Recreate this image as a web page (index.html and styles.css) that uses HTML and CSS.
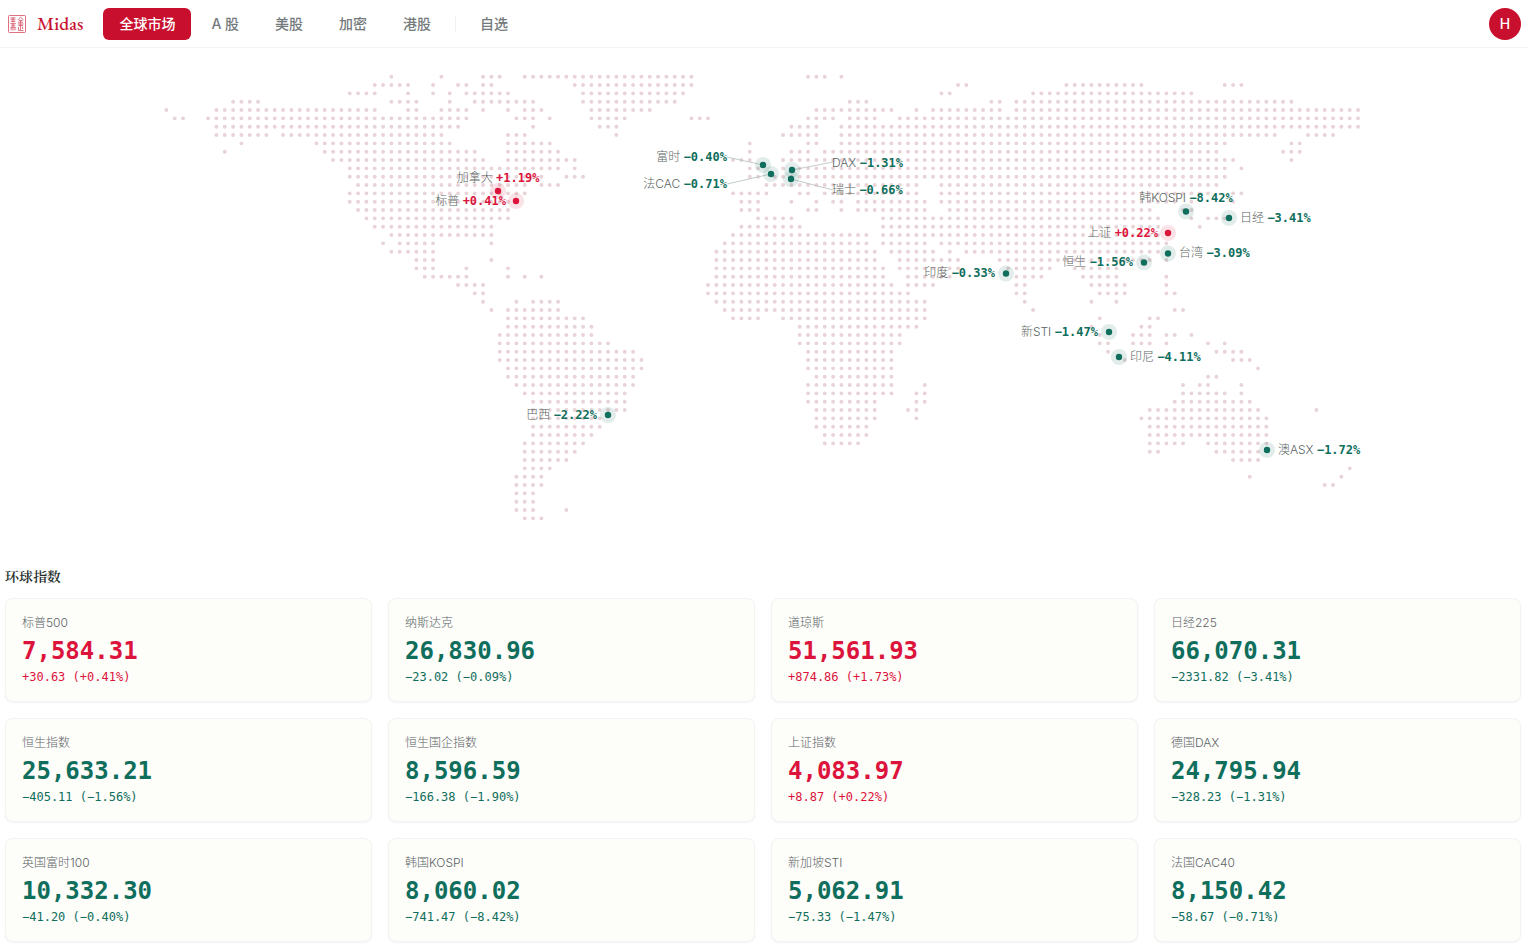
FILE: index.html
```html
<!DOCTYPE html>
<html lang="zh-CN">
<head>
    <meta charset="UTF-8">
    <meta name="viewport" content="width=device-width, initial-scale=1.0">
    <title>Midas</title>
    <link rel="stylesheet" href="styles.css">
</head>
<body>
    <header class="topbar">
        <a class="brand" href="#">
            <svg class="seal" viewBox="0 0 18 18" aria-hidden="true">
                <rect x=".5" y=".5" width="17" height="17" rx="1"/>
                <path d="M12.5 2.2 9.8 5M12.5 2.2 15.6 5M10.8 5.4h3.6M10 7.2h5M12.6 5.4v3.4M9.8 9h5.8M10.4 10.6h4.6M12.6 9v6.4M10.6 12v3.6M10.6 15.6h5M14.6 11.8v2.4M2.4 3h5.2M2.6 4.8h4.8M5 2.2v5M3 6.6h4.4M2.4 8.6h5.4M3.2 10.2h4M5 8.6v7M2.6 12.2h5M3.2 12.2v3.2M7 12.2v3.2"/>
            </svg>
            <span>Midas</span>
        </a>
        <nav class="tabs">
            <a class="tab active" href="#">全球市场</a>
            <a class="tab" href="#">A 股</a>
            <a class="tab" href="#">美股</a>
            <a class="tab" href="#">加密</a>
            <a class="tab" href="#">港股</a>
            <span class="divider"></span>
            <a class="tab" href="#">自选</a>
        </nav>
        <button class="avatar" type="button">H</button>
    </header>

    <main>
        <svg class="map" viewBox="0 0 1528 504">
            <!-- one unit per dot, one line per row -->
            <g transform="translate(166.4 28.7) scale(8.3333)">
                <path class="land" d="
                    M27 0h.1M33 0h.1M38 0h2.1M43 0h20.1M77 0h2.1M81 0h.1
                    M25 1h4.1M32 1h.1M35 1h1.1M38 1h1.1M49 1h14.1M95 1h1.1M108 1h9.1M127 1h2.1
                    M22 2h3.1M29 2h.1M32 2h.1M34 2h.1M36 2h5.1M50 2h12.1M93 2h1.1M104 2h19.1
                    M8 3h3.1M27 3h3.1M34 3h.1M37 3h7.1M50 3h11.1M82 3h2.1M99 3h1.1M102 3h33.1
                    M0 4h.1M6 4h19.1M29 4h1.1M33 4h3.1M38 4h.1M41 4h.1M43 4h2.1M51 4h7.1M78 4h9.1M90 4h.1M92 4h8.1M102 4h41.1
                    M1 5h1.1M5 5h31.1M42 5h2.1M46 5h.1M51 5h4.1M63 5h2.1M77 5h3.1M82 5h3.1M88 5h55.1
                    M6 6h29.1M44 6h.1M52 6h2.1M75 6h3.1M81 6h62.1
                    M6 7h6.1M14 7h19.1M41 7h2.1M54 7h.1M74 7h4.1M81 7h52.1M137 7h3.1
                    M9 8h.1M18 8h16.1M41 8h5.1M70 8h.1M77 8h1.1M81 8h46.1M135 8h1.1
                    M7 9h.1M19 9h18.1M41 9h6.1M70 9h.1M75 9h2.1M79 9h47.1M134 9h2.1
                    M20 10h18.1M41 10h8.1M68 10h2.1M74 10h54.1M135 10h.1
                    M22 11h25.1M49 11h.1M70 11h1.1M74 11h53.1M129 11h.1
                    M22 12h23.1M48 12h2.1M70 12h1.1M73 12h54.1
                    M23 13h20.1M45 13h2.1M72 13h18.1M93 13h33.1
                    M22 14h21.1M68 14h4.1M76 14h1.1M79 14h11.1M93 14h32.1M128 14h1.1
                    M22 15h19.1M69 15h2.1M75 15h.1M78 15h.1M80 15h1.1M83 15h8.1M93 15h28.1M123 15h.1M128 15h.1
                    M23 16h18.1M69 16h2.1M77 16h1.1M81 16h.1M83 16h8.1M94 16h24.1M122 16h1.1
                    M24 17h17.1M71 17h4.1M86 17h33.1M123 17h.1M125 17h2.1
                    M25 18h14.1M69 18h7.1M86 18h33.1M124 18h.1
                    M27 19h12.1M68 19h16.1M86 19h33.1
                    M26 20h.1M28 20h4.1M39 20h.1M67 20h17.1M86 20h5.1M93 20h27.1
                    M27 21h5.1M66 21h19.1M87 21h5.1M94 21h.1M96 21h23.1
                    M30 22h2.1M39 22h.1M66 22h19.1M88 22h7.1M100 22h18.1M120 22h.1
                    M30 23h2.1M36 23h.1M41 23h.1M66 23h20.1M88 23h7.1M101 23h5.1M109 23h5.1
                    M31 24h5.1M41 24h.1M43 24h.1M45 24h.1M66 24h20.1M89 24h5.1M102 24h3.1M110 24h4.1M120 24h.1
                    M35 25h3.1M65 25h22.1M89 25h3.1M102 25h1.1M111 25h4.1M120 25h.1
                    M37 26h1.1M65 26h24.1M102 26h1.1M112 26h3.1M120 26h1.1
                    M38 27h.1M42 27h.1M44 27h3.1M66 27h25.1M103 27h.1M111 27h.1M114 27h.1
                    M39 28h.1M41 28h6.1M67 28h24.1M104 28h.1M121 28h1.1
                    M41 29h9.1M68 29h3.1M74 29h17.1M112 29h.1M118 29h1.1
                    M41 30h10.1M76 30h14.1M111 30h.1M117 30h1.1
                    M40 31h11.1M76 31h12.1M112 31h.1M116 31h2.1M120 31h1.1M123 31h.1
                    M40 32h13.1M76 32h12.1M112 32h1.1M116 32h2.1M120 32h.1M125 32h.1M127 32h.1
                    M40 33h16.1M77 33h10.1M113 33h.1M126 33h3.1
                    M40 34h17.1M77 34h10.1M115 34h.1M128 34h2.1
                    M41 35h16.1M77 35h10.1M131 35h.1
                    M41 36h15.1M78 36h9.1M125 36h1.1
                    M42 37h14.1M77 37h10.1M91 37h.1M122 37h.1M124 37h1.1M129 37h.1
                    M43 38h12.1M77 38h10.1M90 38h1.1M122 38h5.1M129 38h.1
                    M44 39h11.1M77 39h8.1M90 39h1.1M121 39h9.1
                    M44 40h11.1M78 40h7.1M89 40h1.1M118 40h13.1M138 40h.1
                    M44 41h8.1M78 41h7.1M90 41h.1M117 41h15.1
                    M44 42h8.1M78 42h6.1M118 42h14.1
                    M44 43h7.1M79 43h5.1M118 43h14.1
                    M43 44h7.1M79 44h4.1M118 44h4.1M125 44h7.1
                    M43 45h6.1M118 45h1.1M126 45h5.1
                    M43 46h5.1M128 46h3.1
                    M43 47h3.1M142 47h.1
                    M42 48h3.1M130 48h.1M141 48h.1
                    M42 49h3.1M139 49h1.1
                    M42 50h2.1
                    M42 51h2.1
                    M42 52h2.1M48 52h.1
                    M43 53h2.1"/>
            </g>

            <g class="leaders">
                <path d="M727 109 763 117M727 136 771 126M833 114 792 122M833 142 791 131"/>
            </g>

            <g class="up">
                <circle class="halo" cx="498" cy="143" r="8"/><circle cx="498" cy="143" r="3.200"/>
                <circle class="halo" cx="516" cy="153" r="8"/><circle cx="516" cy="153" r="3.200"/>
                <circle class="halo" cx="1168" cy="185" r="8"/><circle cx="1168" cy="185" r="3.200"/>
            </g>
            <g class="down">
                <circle class="halo" cx="763" cy="117" r="8"/><circle cx="763" cy="117" r="3.200"/>
                <circle class="halo" cx="771" cy="126" r="8"/><circle cx="771" cy="126" r="3.200"/>
                <circle class="halo" cx="792" cy="122" r="8"/><circle cx="792" cy="122" r="3.200"/>
                <circle class="halo" cx="791" cy="131" r="8"/><circle cx="791" cy="131" r="3.200"/>
                <circle class="halo" cx="1186" cy="163.500" r="8"/><circle cx="1186" cy="163.500" r="3.200"/>
                <circle class="halo" cx="1229" cy="170" r="8"/><circle cx="1229" cy="170" r="3.200"/>
                <circle class="halo" cx="1168" cy="205.500" r="8"/><circle cx="1168" cy="205.500" r="3.200"/>
                <circle class="halo" cx="1144" cy="214.500" r="8"/><circle cx="1144" cy="214.500" r="3.200"/>
                <circle class="halo" cx="1006" cy="225.500" r="8"/><circle cx="1006" cy="225.500" r="3.200"/>
                <circle class="halo" cx="1109" cy="284" r="8"/><circle cx="1109" cy="284" r="3.200"/>
                <circle class="halo" cx="1119" cy="309" r="8"/><circle cx="1119" cy="309" r="3.200"/>
                <circle class="halo" cx="608" cy="367" r="8"/><circle cx="608" cy="367" r="3.200"/>
                <circle class="halo" cx="1267" cy="402" r="8"/><circle cx="1267" cy="402" r="3.200"/>
            </g>

            <g class="labels">
                <text class="mid" x="498" y="134">加拿大 <tspan class="pct up">+1.19%</tspan></text>
                <text class="end" x="506" y="157">标普 <tspan class="pct up">+0.41%</tspan></text>
                <text class="end" x="727" y="113">富时 <tspan class="pct down">−0.40%</tspan></text>
                <text class="end" x="727" y="140">法CAC <tspan class="pct down">−0.71%</tspan></text>
                <text x="832" y="119">DAX <tspan class="pct down">−1.31%</tspan></text>
                <text x="832" y="146">瑞士 <tspan class="pct down">−0.66%</tspan></text>
                <text class="mid" x="1186" y="154">韩KOSPI <tspan class="pct down">−8.42%</tspan></text>
                <text x="1240" y="174">日经 <tspan class="pct down">−3.41%</tspan></text>
                <text class="end" x="1158" y="189">上证 <tspan class="pct up">+0.22%</tspan></text>
                <text x="1179" y="209">台湾 <tspan class="pct down">−3.09%</tspan></text>
                <text class="end" x="1133" y="218">恒生 <tspan class="pct down">−1.56%</tspan></text>
                <text class="end" x="995" y="229">印度 <tspan class="pct down">−0.33%</tspan></text>
                <text class="end" x="1098" y="288">新STI <tspan class="pct down">−1.47%</tspan></text>
                <text x="1130" y="313">印尼 <tspan class="pct down">−4.11%</tspan></text>
                <text class="end" x="597" y="371">巴西 <tspan class="pct down">−2.22%</tspan></text>
                <text x="1278" y="406">澳ASX <tspan class="pct down">−1.72%</tspan></text>
            </g>
        </svg>

        <section class="indices">
            <h2>环球指数</h2>
            <div class="grid">
                <article class="card up">
                    <h3>标普500</h3>
                    <p class="value">7,584.31</p>
                    <p class="change">+30.63 (+0.41%)</p>
                </article>
                <article class="card down">
                    <h3>纳斯达克</h3>
                    <p class="value">26,830.96</p>
                    <p class="change">−23.02 (−0.09%)</p>
                </article>
                <article class="card up">
                    <h3>道琼斯</h3>
                    <p class="value">51,561.93</p>
                    <p class="change">+874.86 (+1.73%)</p>
                </article>
                <article class="card down">
                    <h3>日经225</h3>
                    <p class="value">66,070.31</p>
                    <p class="change">−2331.82 (−3.41%)</p>
                </article>
                <article class="card down">
                    <h3>恒生指数</h3>
                    <p class="value">25,633.21</p>
                    <p class="change">−405.11 (−1.56%)</p>
                </article>
                <article class="card down">
                    <h3>恒生国企指数</h3>
                    <p class="value">8,596.59</p>
                    <p class="change">−166.38 (−1.90%)</p>
                </article>
                <article class="card up">
                    <h3>上证指数</h3>
                    <p class="value">4,083.97</p>
                    <p class="change">+8.87 (+0.22%)</p>
                </article>
                <article class="card down">
                    <h3>德国DAX</h3>
                    <p class="value">24,795.94</p>
                    <p class="change">−328.23 (−1.31%)</p>
                </article>
                <article class="card down">
                    <h3>英国富时100</h3>
                    <p class="value">10,332.30</p>
                    <p class="change">−41.20 (−0.40%)</p>
                </article>
                <article class="card down">
                    <h3>韩国KOSPI</h3>
                    <p class="value">8,060.02</p>
                    <p class="change">−741.47 (−8.42%)</p>
                </article>
                <article class="card down">
                    <h3>新加坡STI</h3>
                    <p class="value">5,062.91</p>
                    <p class="change">−75.33 (−1.47%)</p>
                </article>
                <article class="card down">
                    <h3>法国CAC40</h3>
                    <p class="value">8,150.42</p>
                    <p class="change">−58.67 (−0.71%)</p>
                </article>
            </div>
        </section>
    </main>
</body>
</html>
```

FILE: styles.css
```css
* {
    margin: 0;
    padding: 0;
    box-sizing: border-box;
}

body {
    background: #fff;
    color: #1f2937;
    font-family: Inter, "Noto Sans CJK SC", sans-serif;
}

a {
    color: inherit;
    text-decoration: none;
}

/* Top bar */
.topbar {
    display: flex;
    align-items: center;
    height: 48px;
    padding: 0 7px 0 8px;
    border-bottom: 1px solid #f3f4f4;
}

.brand {
    display: flex;
    align-items: center;
    gap: 11px;
    margin-right: 20px;
    color: #c8102e;
    font-family: "EB Garamond", "Liberation Serif", serif;
    font-size: 19px;
    font-weight: 500;
}

.seal {
    width: 18px;
    height: 18px;
    fill: none;
    stroke: #c8102e;
    stroke-width: 0.8;
    opacity: 0.75;
}

.tabs {
    display: flex;
    align-items: center;
    gap: 4px;
}

.tab {
    padding: 0 16px;
    border-radius: 6px;
    color: #737a7c;
    font-size: 14px;
    font-weight: 500;
    line-height: 32px;
}

.tab.active {
    background: #c8102e;
    color: #fff;
}

.divider {
    width: 1px;
    height: 16px;
    margin: 0 4px;
    background: #f0f1f1;
}

.avatar {
    width: 32px;
    height: 32px;
    margin-left: auto;
    border: none;
    border-radius: 50%;
    background: #c8102e;
    color: #fff;
    font-family: inherit;
    font-size: 14px;
    font-weight: 500;
    cursor: pointer;
}

/* World map */
.map {
    display: block;
    width: 100%;
    height: auto;
}

.land {
    fill: none;
    stroke: #e8d3d7;
    stroke-width: 0.47;
    stroke-linecap: round;
    stroke-dasharray: 0 1;
}

.leaders {
    fill: none;
    stroke: #b4c0bc;
    stroke-width: 0.8;
}

.up {
    color: #dc143c;
    fill: #dc143c;
}

.down {
    color: #0f6e5c;
    fill: #0f6e5c;
}

.halo {
    opacity: 0.12;
}

.labels {
    fill: #5c6663;
    font-size: 12px;
    font-weight: 300;
}

.labels .end {
    text-anchor: end;
}

.labels .mid {
    text-anchor: middle;
}

.pct {
    font-family: "DejaVu Sans Mono", monospace;
    font-weight: 700;
}

/* Index cards */
.indices {
    padding: 14px 7px 9px 5px;
}

.indices h2 {
    margin-bottom: 12px;
    color: #1c2b28;
    font-family: "Noto Serif SC", "Noto Serif CJK SC", serif;
    font-size: 14px;
    font-weight: 600;
    line-height: 20px;
}

.grid {
    display: grid;
    grid-template-columns: repeat(4, 1fr);
    gap: 16px;
}

.card {
    padding: 16px;
    border: 1px solid #f3f4f2;
    border-radius: 8px;
    background: #fdfdfa;
    box-shadow: 0 1px 2px rgba(0, 0, 0, 0.05);
}

.card h3 {
    color: #5c6466;
    font-size: 12px;
    font-weight: 300;
    line-height: 16px;
}

.value {
    margin-top: 4px;
    font-family: "DejaVu Sans Mono", monospace;
    font-size: 24px;
    font-weight: 700;
    line-height: 32px;
}

.change {
    margin-top: 2px;
    font-family: "DejaVu Sans Mono", monospace;
    font-size: 12px;
    line-height: 16px;
}
```
